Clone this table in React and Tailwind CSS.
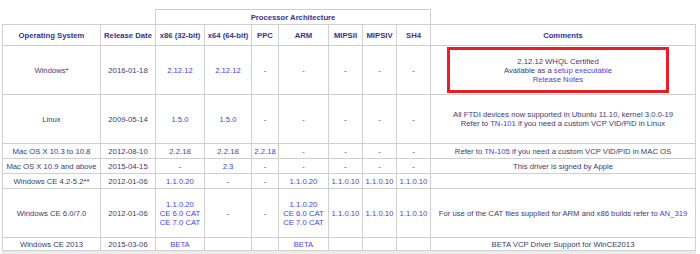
import React from "react";

const Link = ({ children }) => <span className="text-[#4a3cf0]">{children}</span>;

const rows = [
  {
    os: "Windows*",
    date: "2016-01-18",
    h: "h-[49px]",
    cells: ["2.12.12", "2.12.12", "-", "-", "-", "-", "-"],
    links: [true, true],
    comment: (
      <div className="mx-auto ml-[16px] w-[222px] h-[46px] border-[3px] border-[#ec1c24] flex flex-col items-center justify-center">
        <span>2.12.12 WHQL Certified</span>
        <span>
          Available as a <Link>setup executable</Link>
        </span>
        <Link>Release Notes</Link>
      </div>
    ),
  },
  {
    os: "Linux",
    date: "2009-05-14",
    h: "h-[49px]",
    cells: ["1.5.0", "1.5.0", "-", "-", "-", "-", "-"],
    links: [true, true],
    comment: (
      <>
        <div>All FTDI devices now supported in Ubuntu 11.10, kernel 3.0.0-19</div>
        <div>
          Refer to <Link>TN-101</Link> if you need a custom VCP VID/PID in Linux
        </div>
      </>
    ),
  },
  {
    os: "Mac OS X 10.3 to 10.8",
    date: "2012-08-10",
    h: "h-[15px]",
    cells: ["2.2.18", "2.2.18", "2.2.18", "-", "-", "-", "-"],
    links: [true, true, true],
    comment: (
      <div>
        Refer to <Link>TN-105</Link> if you need a custom VCP VID/PID in MAC OS
      </div>
    ),
  },
  {
    os: "Mac OS X 10.9 and above",
    date: "2015-04-15",
    h: "h-[15px]",
    cells: ["-", "2.3", "-", "-", "-", "-", "-"],
    links: [false, true],
    comment: <div>This driver is signed by Apple</div>,
  },
  {
    os: "Windows CE 4.2-5.2**",
    date: "2012-01-06",
    h: "h-[15px]",
    cells: ["1.1.0.20", "-", "-", "1.1.0.20", "1.1.0.10", "1.1.0.10", "1.1.0.10"],
    links: [true, false, false, true, true, true, true],
    comment: null,
  },
  {
    os: "Windows CE 6.0/7.0",
    date: "2012-01-06",
    h: "h-[49px]",
    cells: [
      ["1.1.0.20", "CE 6.0 CAT", "CE 7.0 CAT"],
      "-",
      "-",
      ["1.1.0.20", "CE 6.0 CAT", "CE 7.0 CAT"],
      "1.1.0.10",
      "1.1.0.10",
      "1.1.0.10",
    ],
    links: [true, false, false, true, true, true, true],
    comment: (
      <div>
        For use of the CAT files supplied for ARM and x86 builds refer to <Link>AN_319</Link>
      </div>
    ),
  },
  {
    os: "Windows CE 2013",
    date: "2015-03-06",
    h: "h-[13px]",
    cells: ["BETA", "", "", "BETA", "", "", ""],
    links: [true, false, false, true],
    comment: <div>BETA VCP Driver Support for WinCE2013</div>,
  },
];

const heads = ["x86 (32-bit)", "x64 (64-bit)", "PPC", "ARM", "MIPSII", "MIPSIV", "SH4"];

export default function App() {
  const td = "border border-[#cfcfcf] p-0 text-center align-middle";
  return (
    <div
      className="w-[700px] h-[254px] bg-white pt-[9px] pl-[2px] overflow-hidden text-[7.7px] leading-[9px] text-[#3a3a78]"
      style={{ fontFamily: '"Liberation Sans", Arial, sans-serif' }}
    >
      <table className="table-fixed border-collapse w-[694px]">
        <colgroup>
          <col className="w-[98px]" />
          <col className="w-[55px]" />
          <col className="w-[49px]" />
          <col className="w-[47px]" />
          <col className="w-[27px]" />
          <col className="w-[50px]" />
          <col className="w-[34px]" />
          <col className="w-[34px]" />
          <col className="w-[34px]" />
          <col />
        </colgroup>
        <thead className="font-bold text-[#33338f]">
          <tr className="h-[15px]">
            <th className="p-0 border-b border-[#cfcfcf]" colSpan={2}></th>
            <th className={td} colSpan={7}>
              Processor Architecture
            </th>
            <th className="p-0 border-b border-[#cfcfcf]"></th>
          </tr>
          <tr className="h-[21px]">
            <th className={td}>Operating System</th>
            <th className={td}>Release Date</th>
            {heads.map((h) => (
              <th key={h} className={td + " whitespace-nowrap"}>
                {h}
              </th>
            ))}
            <th className={td}>Comments</th>
          </tr>
        </thead>
        <tbody>
          {rows.map((r) => (
            <tr key={r.os} className={r.h}>
              <td className={td + " whitespace-nowrap"}>{r.os}</td>
              <td className={td}>{r.date}</td>
              {r.cells.map((c, i) => (
                <td
                  key={i}
                  className={td + " whitespace-nowrap " + (r.links[i] ? "text-[#4a3cf0]" : "")}
                >
                  {Array.isArray(c) ? c.map((l) => <div key={l}>{l}</div>) : c}
                </td>
              ))}
              <td className={td}>{r.comment}</td>
            </tr>
          ))}
        </tbody>
      </table>
      <div className="w-[694px] h-[5px] bg-[#ececec]"></div>
    </div>
  );
}
